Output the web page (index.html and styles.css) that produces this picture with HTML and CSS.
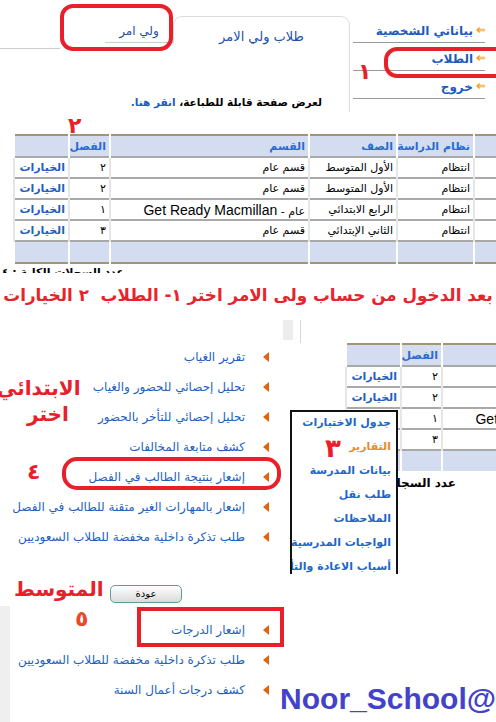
FILE: index.html
```html
<!DOCTYPE html>
<html lang="ar" dir="rtl">
<head>
    <meta charset="UTF-8">
    <meta name="viewport" content="width=device-width, initial-scale=1.0">
    <title>نور - حساب ولي الامر</title>
    <link rel="stylesheet" href="styles.css">
</head>
<body>
<div class="page">

    <!-- الشريط العلوي: القائمة الجانبية والتبويبات -->
    <header class="head">
        <nav class="side">
            <a class="side-item" href="#"><svg class="arr" viewBox="0 0 10 8"><path d="M0 4 L4 0.5 L4 2.5 L10 2.5 L10 5.5 L4 5.5 L4 7.5 Z" fill="#f39a1e"/><path d="M3 4 L10 4" stroke="#fff3d6" stroke-width="1"/></svg>بياناتي الشخصية</a>
            <a class="side-item" href="#"><svg class="arr" viewBox="0 0 10 8"><path d="M0 4 L4 0.5 L4 2.5 L10 2.5 L10 5.5 L4 5.5 L4 7.5 Z" fill="#f39a1e"/><path d="M3 4 L10 4" stroke="#fff3d6" stroke-width="1"/></svg>الطلاب</a>
            <a class="side-item" href="#"><svg class="arr" viewBox="0 0 10 8"><path d="M0 4 L4 0.5 L4 2.5 L10 2.5 L10 5.5 L4 5.5 L4 7.5 Z" fill="#f39a1e"/><path d="M3 4 L10 4" stroke="#fff3d6" stroke-width="1"/></svg>خروج</a>
        </nav>
        <div class="tabbox">
            <div class="tabs">
                <span class="tab tab-on">طلاب ولي الامر</span>
                <span class="tab">ولي امر</span>
                <span class="tab-gap"></span>
                <span class="tab-rest"></span>
            </div>
            <div class="panel">
                <p class="print">لعرض صفحة قابلة للطباعة، <a href="#">انقر هنا.</a></p>
            </div>
        </div>
    </header>

    <table class="grid">
        <colgroup>
            <col style="width:33px"><col style="width:77px"><col style="width:88px">
            <col style="width:199px"><col style="width:41px"><col style="width:55px">
        </colgroup>
        <thead>
            <tr><th></th><th>نظام الدراسة</th><th>الصف</th><th>القسم</th><th>الفصل</th><th></th></tr>
        </thead>
        <tbody>
            <tr><td></td><td>انتظام</td><td>الأول المتوسط</td><td>قسم عام</td><td>٢</td><td><a href="#">الخيارات</a></td></tr>
            <tr><td></td><td>انتظام</td><td>الأول المتوسط</td><td>قسم عام</td><td>٢</td><td><a href="#">الخيارات</a></td></tr>
            <tr><td></td><td>انتظام</td><td>الرابع الابتدائي</td><td>عام - <span class="en">Get Ready Macmillan</span></td><td>١</td><td><a href="#">الخيارات</a></td></tr>
            <tr><td></td><td>انتظام</td><td>الثاني الإبتدائي</td><td>قسم عام</td><td>٣</td><td><a href="#">الخيارات</a></td></tr>
        </tbody>
        <tfoot>
            <tr><td></td><td></td><td></td><td></td><td></td><td></td></tr>
        </tfoot>
    </table>
    <div class="cut"><span>عدد السجلات الكلية : ٤</span></div>

    <h1 class="title">بعد الدخول من حساب ولى الامر اختر ١- الطلاب&nbsp; ٢ الخيارات</h1>

    <!-- قائمة التقارير مع قائمة الخيارات المنسدلة -->
    <section class="mid">
        <div class="shot">
            <div class="shot-edge"><span class="strip"></span><span class="rule"></span></div>
            <div class="frag">
                <table class="grid grid-frag">
                    <colgroup>
                        <col style="width:33px"><col style="width:77px"><col style="width:88px">
                        <col style="width:199px"><col style="width:41px"><col style="width:55px">
                    </colgroup>
                    <thead>
                        <tr><th></th><th></th><th></th><th></th><th>الفصل</th><th></th></tr>
                    </thead>
                    <tbody>
                        <tr><td></td><td></td><td></td><td></td><td>٢</td><td><a href="#">الخيارات</a></td></tr>
                        <tr><td></td><td></td><td></td><td></td><td>٢</td><td><a href="#">الخيارات</a></td></tr>
                        <tr><td></td><td></td><td></td><td>عام - <span class="en">Get Ready Macmillan</span></td><td>١</td><td></td></tr>
                        <tr><td></td><td></td><td></td><td></td><td>٣</td><td></td></tr>
                    </tbody>
                    <tfoot>
                        <tr><td></td><td></td><td></td><td></td><td></td><td></td></tr>
                    </tfoot>
                </table>
            </div>
            <p class="count">عدد السجلات الكلية</p>
            <ul class="popup">
                <li><a href="#">جدول الاختبارات</a></li>
                <li><a href="#" class="hot">التقارير</a></li>
                <li><a href="#">بيانات المدرسة</a></li>
                <li><a href="#">طلب نقل</a></li>
                <li><a href="#">الملاحظات</a></li>
                <li><a href="#">الواجبات المدرسية</a></li>
                <li><a href="#">أسباب الاعادة والتأخر</a></li>
            </ul>
        </div>
        <ul class="links">
            <li><a href="#">تقرير الغياب</a></li>
            <li><a href="#">تحليل إحصائي للحضور والغياب</a></li>
            <li><a href="#">تحليل إحصائي للتأخر بالحضور</a></li>
            <li><a href="#">كشف متابعة المخالفات</a></li>
            <li><a href="#">إشعار بنتيجة الطالب في الفصل</a></li>
            <li><a href="#">إشعار بالمهارات الغير متقنة للطالب في الفصل</a></li>
            <li><a href="#">طلب تذكرة داخلية مخفضة للطلاب السعوديين</a></li>
        </ul>
    </section>

    <!-- تقارير المرحلة المتوسطة -->
    <section class="low">
        <div class="brand-col">
            <div class="brand" dir="ltr">Noor_School@</div>
        </div>
        <div class="low-col">
            <div class="back-row"><button class="back">عودة</button></div>
            <ul class="links links-low">
                <li><a href="#">إشعار الدرجات</a></li>
                <li><a href="#">طلب تذكرة داخلية مخفضة للطلاب السعوديين</a></li>
                <li><a href="#">كشف درجات أعمال السنة</a></li>
            </ul>
        </div>
    </section>

    <!-- علامات الشرح -->
    <span class="mark mark-tab"></span>
    <span class="mark mark-nav"></span>
    <span class="mark mark-item"></span>
    <span class="mark-sq"></span>
    <span class="note n1">١</span>
    <span class="note n2">٢</span>
    <span class="note n3">٣</span>
    <span class="note n4">٤</span>
    <span class="note n5">٥</span>
    <span class="note w-prim">الابتدائي</span>
    <span class="note w-pick">اختر</span>
    <span class="note w-mid">المتوسط</span>
</div>
</body>
</html>
```

FILE: styles.css
```css
* {
    box-sizing: border-box;
}
body {
    margin: 0;
    background: #ffffff;
    font-family: 'DejaVu Sans', 'Liberation Sans', sans-serif;
    color: #000;
}
a {
    text-decoration: none;
}
.page {
    position: relative;
    width: 496px;
    height: 722px;
    overflow: hidden;
}

/* ---- header ---- */
.head {
    display: flex;
    height: 112px;
}
.side {
    width: 146px;
    padding: 15px 11px 0 3px;
}
.side-item {
    display: flex;
    align-items: flex-end;
    height: 28px;
    padding-bottom: 4px;
    border-bottom: 1px solid #9a9a9a;
    color: #1d5bbf;
    font-size: 12px;
    font-weight: bold;
}
.side-item .arr {
    width: 9px;
    height: 8px;
    margin: 0 0 4px 3px;
}
.tabbox {
    width: 350px;
}
.tabs {
    display: flex;
    align-items: flex-end;
    height: 43px;
    padding-top: 16px;
}
.tab {
    height: 27px;
    width: 68px;
    text-align: center;
    font-size: 12px;
    line-height: 30px;
    color: #1d4f9f;
    border-bottom: 1px solid #cccccc;
}
.tab-on {
    width: 177px;
    border: 1px solid #dcdcdc;
    border-bottom: none;
    border-radius: 9px 9px 0 0;
    font-size: 13px;
    line-height: 40px;
    height: 27px;
    color: #1d4fa8;
}
.tab-gap {
    width: 45px;
}
.tab-rest {
    flex: 1;
    height: 6px;
    margin-bottom: -6px;
    border-bottom: 1px solid #cccccc;
}
.panel {
    height: 69px;
    border-right: 1px solid #dcdcdc;
    padding: 53px 27px 0 0;
}
.print {
    margin: 0;
    font-size: 10.5px;
    font-weight: bold;
}
.print a {
    color: #1d5bbf;
}

/* ---- students table ---- */
.grid {
    width: 493px;
    margin: 22px -12px 0 0;
    table-layout: fixed;
    border-collapse: collapse;
    border: 2px solid #a39477;
    font-size: 11px;
}
.grid th,
.grid td {
    padding: 0 3px;
    text-align: right;
    white-space: nowrap;
    overflow: hidden;
    border-left: 2px solid #e6e6e6;
}
.grid th {
    height: 22px;
    background: #d4ddef;
    color: #2a6bd0;
    font-weight: bold;
    border-left-color: #ffffff;
}
.grid td {
    height: 21px;
    border-top: 2px solid #a9a9a9;
}
.grid tfoot td {
    height: 22px;
    background: #d4ddef;
    border-left-color: #ffffff;
}
.grid td a {
    color: #1f5fc0;
    font-weight: bold;
}
.grid .en {
    font-family: 'Liberation Sans', Arial, sans-serif;
    font-size: 14px;
}
.cut {
    height: 9px;
    overflow: hidden;
    padding: 2px 372px 0 0;
    font-size: 11px;
    font-weight: bold;
    white-space: nowrap;
}

.title {
    margin: 0;
    height: 47px;
    padding-top: 12px;
    font-size: 16.8px;
    font-weight: bold;
    color: #e8232b;
    text-align: center;
    white-space: nowrap;
}

/* ---- reports menu ---- */
.mid {
    display: flex;
    height: 260px;
}
.shot {
    position: relative;
    width: 213px;
    direction: ltr;
}
.shot-edge {
    display: flex;
    height: 23px;
}
.strip {
    width: 10px;
    height: 20px;
    background: #ececec;
}
.rule {
    width: 1px;
    height: 23px;
    margin-left: 7px;
    background: #d8d8d8;
}
.frag {
    height: 128px;
    padding-left: 62px;
    overflow: hidden;
}
.grid-frag {
    margin: 0;
    direction: rtl;
}
.count {
    margin: 5px 0 0;
    padding-right: 40px;
    text-align: right;
    font-size: 12px;
    font-weight: bold;
    direction: rtl;
}
.popup {
    position: absolute;
    left: 7px;
    top: 90px;
    width: 108px;
    height: 164px;
    margin: 0;
    padding: 4px 5px 0 0;
    list-style: none;
    background: #fff;
    border: 2px solid #111;
    border-bottom: none;
    direction: rtl;
    overflow: hidden;
}
.popup li {
    height: 24px;
    font-size: 11px;
    font-weight: bold;
    white-space: nowrap;
}
.popup a {
    color: #1e66c9;
}
.popup a.hot {
    color: #f08a24;
}
.links {
    width: 283px;
    margin: 0;
    padding: 22px 0 0;
    list-style: none;
}
.links li {
    display: flex;
    align-items: center;
    height: 30px;
    padding-right: 14px;
    font-size: 12px;
    white-space: nowrap;
}
.links li::before {
    content: '';
    width: 0;
    height: 0;
    margin-left: 18px;
    border-top: 5px solid transparent;
    border-bottom: 5px solid transparent;
    border-right: 6px solid #e2620e;
}
.links a {
    color: #1d5fbf;
}

/* ---- intermediate stage ---- */
.low {
    display: flex;
    height: 144px;
}
.brand-col {
    display: flex;
    align-items: flex-end;
    width: 213px;
    padding-bottom: 8px;
}
.brand {
    font-family: 'Liberation Sans', Arial, sans-serif;
    font-size: 30px;
    font-weight: bold;
    color: #4343c9;
}
.low-col {
    width: 283px;
}
.back-row {
    display: flex;
    justify-content: flex-start;
    height: 26px;
    padding: 5px 101px 0 0;
}
.back {
    width: 72px;
    height: 18px;
    padding: 0;
    border: 1px solid #5f9f9a;
    border-radius: 5px;
    background: linear-gradient(#ffffff, #dadada);
    font-family: inherit;
    font-size: 10px;
    line-height: 14px;
}
.links-low {
    padding-top: 9px;
    height: 118px;
    border-left: 10px solid #efefef;
}

/* ---- red annotations ---- */
.mark {
    position: absolute;
    border: 4px solid #e8202a;
    border-radius: 13px;
}
.mark-tab {
    left: 60px;
    top: 4px;
    width: 113px;
    height: 47px;
}
.mark-nav {
    left: 384px;
    top: 47px;
    width: 124px;
    height: 31px;
}
.mark-item {
    left: 62px;
    top: 457px;
    width: 219px;
    height: 33px;
    border-radius: 15px;
}
.mark-sq {
    position: absolute;
    left: 137px;
    top: 607px;
    width: 147px;
    height: 40px;
    border: 4px solid #e8202a;
}
.note {
    position: absolute;
    color: #e8202a;
    font-weight: bold;
    line-height: 1;
    white-space: nowrap;
}
.n1 { left: 358px; top: 61px; font-size: 22px; }
.n2 { left: 68px; top: 115px; font-size: 22px; }
.n3 { left: 325px; top: 435px; font-size: 26px; }
.n4 { left: 27px; top: 461px; font-size: 22px; }
.n5 { left: 75px; top: 608px; font-size: 22px; color: #e84a2a; }
.w-prim { left: -3px; top: 378px; font-size: 20px; }
.w-pick { left: 27px; top: 404px; font-size: 20px; }
.w-mid { left: 14px; top: 579px; font-size: 20px; }
```
